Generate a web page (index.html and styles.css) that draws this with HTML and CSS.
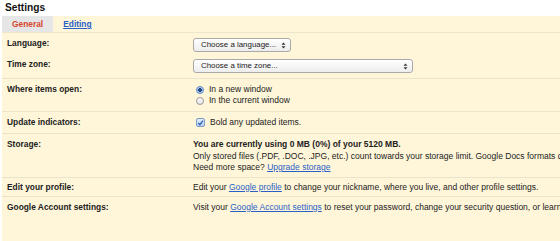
FILE: index.html
```html
<!DOCTYPE html>
<html lang="en">
<head>
  <meta charset="UTF-8" />
  <title>Settings</title>
  <link rel="stylesheet" href="styles.css">
</head>
<body>
  <h1 class="title">Settings</h1>

  <div class="panel">
    <div class="tabs">
      <span class="tab active">General</span>
      <a class="tab" href="#">Editing</a>
    </div>

    <div class="row tight">
      <div class="label">Language:</div>
      <div class="value">
        <div class="select short">Choose a language...
          <svg class="arrows" width="5" height="7" viewBox="0 0 5 7"><path d="M2.5 0.5 L4.5 2.8 L0.5 2.8 Z M2.5 6.5 L4.5 4.2 L0.5 4.2 Z" fill="#333"/></svg>
        </div>
      </div>
    </div>

    <div class="row">
      <div class="label">Time zone:</div>
      <div class="value">
        <div class="select long">Choose a time zone...
          <svg class="arrows" width="5" height="7" viewBox="0 0 5 7"><path d="M2.5 0.5 L4.5 2.8 L0.5 2.8 Z M2.5 6.5 L4.5 4.2 L0.5 4.2 Z" fill="#333"/></svg>
        </div>
      </div>
    </div>

    <div class="row">
      <div class="label">Where items open:</div>
      <div class="value">
        <div class="option"><span class="radio on"></span>In a new window</div>
        <div class="option"><span class="radio"></span>In the current window</div>
      </div>
    </div>

    <div class="row">
      <div class="label">Update indicators:</div>
      <div class="value">
        <div class="option">
          <span class="check">
            <svg width="8" height="8" viewBox="0 0 8 8"><path d="M1.5 4 L3.3 6 L6.8 1.2" fill="none" stroke="#2d5fb8" stroke-width="1.5"/></svg>
          </span>Bold any updated items.
        </div>
      </div>
    </div>

    <div class="row storage">
      <div class="label">Storage:</div>
      <div class="value">
        <b>You are currently using 0 MB (0%) of your 5120 MB.</b><br>
        Only stored files (.PDF, .DOC, .JPG, etc.) count towards your storage limit. Google Docs formats don't count.<br>
        Need more space? <a href="#">Upgrade storage</a>
      </div>
    </div>

    <div class="row compact">
      <div class="label">Edit your profile:</div>
      <div class="value">Edit your <a href="#">Google profile</a> to change your nickname, where you live, and other profile settings.</div>
    </div>

    <div class="row compact last">
      <div class="label">Google Account settings:</div>
      <div class="value">Visit your <a href="#">Google Account settings</a> to reset your password, change your security question, or learn more.</div>
    </div>
  </div>
</body>
</html>
```

FILE: styles.css
```css
html, body {
  margin: 0;
  padding: 0;
}

body {
  font-family: "Liberation Sans", Arial, sans-serif;
  background: #fff;
  color: #222;
  overflow: hidden;
  height: 241px;
}

.title {
  margin: 0;
  padding: 0 5px;
  height: 16px;
  line-height: 15px;
  font-size: 10.2px;
  font-weight: bold;
  color: #111;
}

.panel {
  margin-left: 2px;
  background: #fff6d9;
  height: 225px;
  font-size: 8.5px;
}

.tabs {
  display: flex;
  height: 16px;
  border-bottom: 1px solid #eee6cb;
}

.tab {
  padding: 0 10px;
  line-height: 16px;
  font-weight: bold;
  font-size: 8.4px;
  color: #2b5fc8;
}

.tab.active {
  background: #e6e6e6;
  color: #d6452f;
}

a {
  color: #2b5fc8;
  text-decoration: underline;
}

.row {
  display: grid;
  grid-template-columns: 191px 1fr;
  padding: 5px 0;
  line-height: 11px;
  border-bottom: 1px solid #ebe4cc;
  white-space: nowrap;
}

.row.tight {
  border-bottom: none;
  padding-bottom: 2px;
}

.row.storage {
  line-height: 11.5px;
  padding-bottom: 3.5px;
}

.row.compact {
  padding: 3.5px 0;
}

.row.last {
  border-bottom: none;
  padding-top: 4.5px;
}

.label {
  padding-left: 5px;
  font-weight: bold;
  font-size: 8.4px;
}

.value {
  overflow: hidden;
}

.select {
  position: relative;
  height: 12px;
  line-height: 12px;
  padding-left: 7px;
  border: 1px solid #a9a9a9;
  border-radius: 3px;
  background: linear-gradient(#ffffff, #ededed);
  font-size: 7.9px;
  color: #222;
  box-sizing: content-box;
}

.select.short {
  width: 89px;
}

.select.long {
  width: 211px;
}

.arrows {
  position: absolute;
  right: 4px;
  top: 3px;
}

.option {
  display: flex;
  align-items: center;
}

.radio {
  width: 8px;
  height: 8px;
  margin: 0 5px 0 3px;
  border: 1px solid #999;
  border-radius: 50%;
  background: linear-gradient(#fdfdfd, #e3e3e3);
  box-sizing: border-box;
}

.radio.on {
  border-color: #5b86c4;
  background: radial-gradient(circle, #24457e 0 1.6px, #9cc0ee 2px, #d9e8fa 4px);
}

.check {
  width: 9px;
  height: 9px;
  margin: 0 5px 0 3px;
  border: 1px solid #7e9bc8;
  border-radius: 2px;
  background: linear-gradient(#e3eefc, #b8d0f0);
  box-sizing: border-box;
  display: flex;
  align-items: center;
  justify-content: center;
}
```
